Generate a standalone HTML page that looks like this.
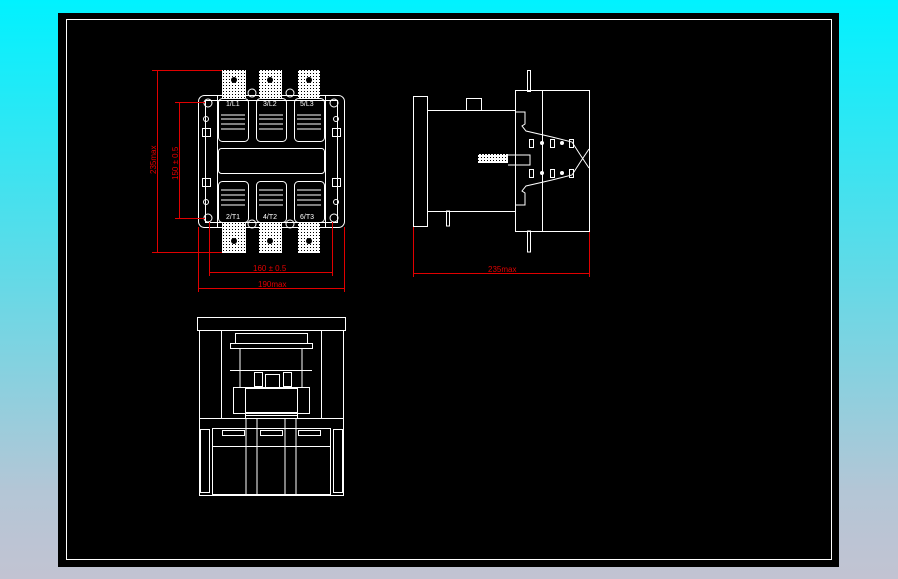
<!DOCTYPE html>
<html><head><style>
html,body{margin:0;padding:0;width:898px;height:579px;overflow:hidden;background:linear-gradient(#00f2ff 0%,#5ddbe8 45%,#b4c6d6 85%,#c2c3d2 100%);font-family:"Liberation Sans",sans-serif}
svg{position:absolute;left:0;top:0}
</style></head><body>
<svg width="898" height="579" viewBox="0 0 898 579" xmlns="http://www.w3.org/2000/svg">
<defs>
<pattern id="dots" width="3" height="3" patternUnits="userSpaceOnUse">
<rect width="3" height="3" fill="#fff"/><rect x="1" y="1" width="1" height="1" fill="#000"/>
</pattern>
</defs>
<rect x="58" y="13" width="781" height="554" fill="#000"/>
<rect x="66.5" y="19.5" width="765" height="540" fill="none" stroke="#fff" stroke-width="1"/>
<g fill="none" stroke="#fff" stroke-width="1">
<rect x="198.5" y="95.5" width="146" height="132" rx="6"/>
<rect x="205.5" y="100.5" width="132" height="122"/>
<line x1="217.5" y1="96" x2="217.5" y2="227"/><line x1="325.5" y1="96" x2="325.5" y2="227"/>
<rect x="218.5" y="98.5" width="30" height="43" rx="4"/>
<rect x="256.5" y="98.5" width="30" height="43" rx="4"/>
<rect x="294.5" y="98.5" width="30" height="43" rx="4"/>
<rect x="218.5" y="148.5" width="106" height="25" rx="3"/>
<rect x="218.5" y="181.5" width="30" height="41" rx="4"/>
<rect x="256.5" y="181.5" width="30" height="41" rx="4"/>
<rect x="294.5" y="181.5" width="30" height="41" rx="4"/>
<path d="M221 115h24M221 119h24M221 124h24M221 129h24M259 115h24M259 119h24M259 124h24M259 129h24M297 115h24M297 119h24M297 124h24M297 129h24"/>
<path d="M221 190h24M221 195h24M221 200h24M221 205h24M259 190h24M259 195h24M259 200h24M259 205h24M297 190h24M297 195h24M297 200h24M297 205h24"/>
<circle cx="208" cy="103" r="4"/><circle cx="334" cy="103" r="4"/><circle cx="208" cy="218" r="4"/><circle cx="334" cy="218" r="4"/>
<circle cx="252" cy="93" r="4"/><circle cx="290" cy="93" r="4"/><circle cx="252" cy="224" r="4"/><circle cx="290" cy="224" r="4"/>
<circle cx="206" cy="119" r="2.5"/><circle cx="336" cy="119" r="2.5"/><circle cx="206" cy="202" r="2.5"/><circle cx="336" cy="202" r="2.5"/>
<rect x="202.5" y="128.5" width="8" height="8"/><rect x="332.5" y="128.5" width="8" height="8"/>
<rect x="202.5" y="178.5" width="8" height="8"/><rect x="332.5" y="178.5" width="8" height="8"/>
</g>
<g fill="url(#dots)">
<rect x="222" y="70" width="24" height="28"/><rect x="259" y="70" width="23" height="28"/><rect x="298" y="70" width="22" height="28"/>
<rect x="222" y="223" width="24" height="30"/><rect x="259" y="223" width="23" height="30"/><rect x="298" y="223" width="22" height="30"/>
</g>
<g fill="#000">
<circle cx="234" cy="80" r="3"/><circle cx="270" cy="80" r="3"/><circle cx="309" cy="80" r="3"/>
<circle cx="234" cy="241" r="3"/><circle cx="270" cy="241" r="3"/><circle cx="309" cy="241" r="3"/>
</g>
<g fill="#fff" font-size="7" font-family="Liberation Sans">
<text x="226" y="106">1/L1</text><text x="263" y="106">3/L2</text><text x="300" y="106">5/L3</text>
<text x="226" y="219">2/T1</text><text x="263" y="219">4/T2</text><text x="300" y="219">6/T3</text>
</g>
<g stroke="#e00000" stroke-width="1" fill="none">
<path d="M157.5 70v182M152 70.5h70M152 252.5h70M179.5 102v116M175 102.5h30M175 218.5h30"/>
<path d="M209 272.5h124M209.5 222v54M332.5 222v54M198 288.5h146M198.5 227v65M344.5 227v65"/>
<path d="M413 273.5h176M413.5 226v51M589.5 232v45"/>
</g>
<g fill="#e00000" font-size="8" font-family="Liberation Sans">
<text x="253" y="271">160 ± 0.5</text>
<text x="258" y="287">190max</text>
<text x="488" y="272">235max</text>
<text transform="translate(156,174) rotate(-90)">235max</text>
<text transform="translate(178,180) rotate(-90)">150 ± 0.5</text>
</g>
<g fill="none" stroke="#fff" stroke-width="1">
<rect x="413.5" y="96.5" width="14" height="130"/>
<path d="M427 110.5h88M427 211.5h88"/>
<rect x="466.5" y="98.5" width="15" height="12"/>
<rect x="446.5" y="211" width="3" height="15"/>
<rect x="515.5" y="90.5" width="74" height="141"/>
<line x1="542.5" y1="91" x2="542.5" y2="231"/>
<rect x="527.5" y="70.5" width="3" height="21"/><rect x="527.5" y="231" width="3" height="21"/>
<path d="M515 112h10v12l-3 2 4 5 26 6 20 5 9 14 8 12M515 205h10v-12l-3-2 4-5 26-6 20-5 9-14 8-12"/>
<path d="M508 155h22v10h-22"/>
<rect x="529.5" y="139.5" width="4" height="8"/><rect x="550.5" y="139.5" width="4" height="8"/><rect x="569.5" y="139.5" width="4" height="8"/>
<rect x="529.5" y="169.5" width="4" height="8"/><rect x="550.5" y="169.5" width="4" height="8"/><rect x="569.5" y="169.5" width="4" height="8"/>
</g>
<rect x="478" y="154" width="30" height="9" fill="url(#dots)"/>
<g fill="#fff"><circle cx="542" cy="143" r="2"/><circle cx="562" cy="143" r="2"/><circle cx="542" cy="173" r="2"/><circle cx="562" cy="173" r="2"/></g>
<g fill="none" stroke="#fff" stroke-width="1">
<path d="M197.5 317.5h148v13h-148z"/>
<path d="M199.5 331v88M343.5 331v88M221.5 331v88M321.5 331v88"/>
<rect x="235.5" y="333.5" width="72" height="10"/>
<rect x="230.5" y="343.5" width="82" height="5"/>
<path d="M240 349v38M302 349v38M230 370.5h82"/>
<rect x="265.5" y="374.5" width="14" height="13"/>
<rect x="254.5" y="372.5" width="8" height="14"/><rect x="283.5" y="372.5" width="8" height="14"/>
<rect x="233.5" y="387.5" width="76" height="26"/>
<rect x="245.5" y="388.5" width="52" height="27"/>
<rect x="245.5" y="412.5" width="52" height="6"/>
<rect x="199.5" y="418.5" width="144" height="77"/>
<rect x="212.5" y="428.5" width="118" height="66"/>
<path d="M246 419v76M257 419v76M285 419v76M296 419v76M212 446.5h118"/>
<rect x="222.5" y="430.5" width="22" height="5"/><rect x="260.5" y="430.5" width="22" height="5"/><rect x="298.5" y="430.5" width="22" height="5"/>
<rect x="200.5" y="429.5" width="9" height="63"/><rect x="333.5" y="429.5" width="9" height="63"/>
</g>
</svg>
</body></html>
